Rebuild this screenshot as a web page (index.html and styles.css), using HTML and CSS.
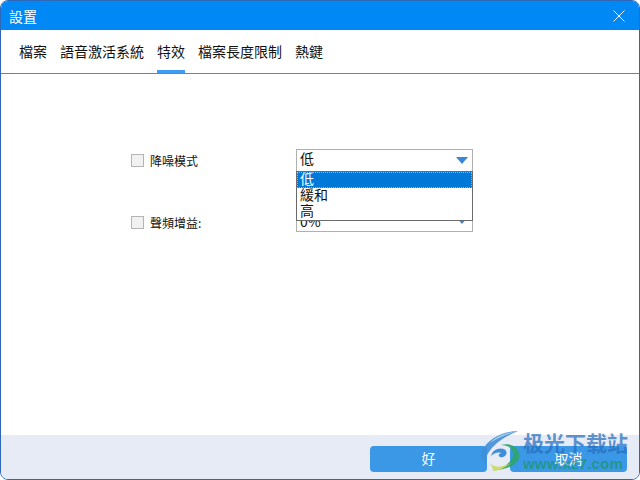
FILE: index.html
```html
<!DOCTYPE html>
<html lang="zh-Hant">
<head>
<meta charset="utf-8">
<title>設置</title>
<link rel="stylesheet" href="styles.css">
</head>
<body>
<div class="window">
  <header class="titlebar">
    <span class="title">設置</span>
    <svg class="close" width="12" height="12" viewBox="0 0 12 12"><path d="M.5.5l11 11M11.500.5l-11 11" stroke="#fff" stroke-width="1" fill="none"/></svg>
  </header>
  <nav class="tabs">
    <span class="tab">檔案</span>
    <span class="tab">語音激活系統</span>
    <span class="tab active">特效</span>
    <span class="tab">檔案長度限制</span>
    <span class="tab">熱鍵</span>
  </nav>
  <main class="content">
    <div class="row">
      <label class="check"><span class="box"></span>降噪模式</label>
      <div class="select">
        <span class="value">低</span>
        <span class="arrow"></span>
        <ul class="menu">
          <li class="selected">低</li>
          <li>緩和</li>
          <li>高</li>
        </ul>
      </div>
    </div>
    <div class="row">
      <label class="check check-gain"><span class="box"></span>聲頻增益:</label>
      <div class="select select-gain">
        <span class="value">0%</span>
        <span class="arrow"></span>
      </div>
    </div>
  </main>
  <footer class="footer">
    <button class="btn">好</button>
    <button class="btn">取消</button>
  </footer>
  <div class="watermark">
    <svg class="wm-logo" width="46" height="42" viewBox="0 0 46 42">
      <path d="M37 1C23 1 6 9 1 21c-2 6 0 11 5 13C3 28 8 20 16 13 22 8 30 4 37 1z" fill="#3f8fd8" opacity=".9"/>
      <path d="M37 1C27 2 15 6 9 13c8-5 17-9 28-12z" fill="#a9cfe8" opacity=".9"/>
      <path d="M20 15c10-3 20 3 18 13-2 7-10 10-20 12 8-5 14-10 14-16 0-6-6-9-12-9z" fill="#2fa56e" opacity=".92"/>
      <path d="M10 26c1-6 8-9 13-7 4 2 3 7-1 8-3 1-5-1-4-3 1-1 3-1 3 0-2-3-8-1-11 2z" fill="#3f8fd8"/>
      <path d="M8 32c4 6 12 6 22 1-6 5-12 8-18 8 0-4-2-6-4-9z" fill="#c9d95c" opacity=".9"/>
    </svg>
    <div class="wm-text">
      <span class="wm-name">极光下载站</span>
      <span class="wm-url">www.xz7.com</span>
    </div>
  </div>
</div>
</body>
</html>
```
FILE: styles.css
```css
* { box-sizing: border-box; }
html, body { margin: 0; padding: 0; height: 100%; background: #fff; }
body { font-family: "Noto Sans CJK TC", "Liberation Sans", sans-serif; color: #111; overflow: hidden; }

.window {
  position: relative;
  width: 640px;
  height: 480px;
  display: flex;
  flex-direction: column;
  background: #fff;
  border-radius: 8px;
  border: 1px solid #2f68b8;
  overflow: hidden;
}

.titlebar {
  height: 29px;
  flex: none;
  background: #0088f5;
  color: #fff;
  display: flex;
  align-items: center;
  justify-content: space-between;
  padding: 0 14px 0 8px;
}
.title { font-size: 14px; line-height: 20px; }
.close { display: block; }

.tabs {
  height: 44px;
  flex: none;
  display: flex;
  gap: 13px;
  padding-left: 18px;
  border-bottom: 1px solid #808080;
}
.tab {
  font-size: 14px;
  line-height: 42px;
  height: 43px;
}
.tab.active { box-shadow: inset 0 -3px 0 #3f9cf0; }

.content {
  flex: 1;
  display: flex;
  flex-direction: column;
  padding: 76px 0 0 130px;
  gap: 39px;
}
.row {
  display: flex;
  align-items: center;
  height: 21px;
}
.check {
  width: 165px;
  display: flex;
  align-items: center;
  gap: 6px;
  font-size: 12px;
}
.check-gain { margin-top: 4px; }
.box {
  width: 13px;
  height: 13px;
  background: #f1f1f1;
  border: 1px solid #b4b4b4;
}

.select {
  position: relative;
  width: 177px;
  height: 23px;
  border: 1px solid #b0b0b0;
  background: #fff;
  font-size: 14px;
  line-height: 16px;
  padding-left: 3px;
}
.select-gain .value { display: block; padding-top: 3px; }
.arrow {
  position: absolute;
  right: 4px;
  top: 7px;
  width: 0;
  height: 0;
  border-left: 6px solid transparent;
  border-right: 6px solid transparent;
  border-top: 7px solid #3a86d8;
}
.menu {
  position: absolute;
  z-index: 2;
  left: -1px;
  top: 21px;
  width: 177px;
  height: 50px;
  margin: 0;
  padding: 0;
  list-style: none;
  background: #fff;
  border: 1px solid #6a6a6a;
}
.menu li {
  height: 16px;
  line-height: 13px;
  padding-left: 3px;
  font-size: 14px;
  color: #111;
}
.menu li.selected {
  background: #0078d7;
  color: #fff;
  outline: 1px dotted #e8a060;
  outline-offset: -1px;
}

.footer {
  height: 44px;
  flex: none;
  background: #e6ebf5;
  display: flex;
  justify-content: flex-end;
  gap: 23px;
  padding: 11px 12px 0 0;
}
.btn {
  width: 117px;
  height: 26px;
  border: 0;
  border-radius: 4px;
  background: #3a98e6;
  color: #fff;
  font-family: inherit;
  font-size: 14px;
  padding: 0 0 2px;
}

.watermark {
  position: absolute;
  left: 480px;
  top: 429px;
  display: flex;
  pointer-events: none;
}
.wm-logo { display: block; }
.wm-text {
  display: flex;
  flex-direction: column;
  margin-left: -4px;
}
.wm-name {
  font-size: 21px;
  line-height: 24px;
  font-weight: 700;
  color: rgba(40, 110, 190, .72);
}
.wm-url {
  font-family: "Liberation Sans", sans-serif;
  font-size: 15px;
  line-height: 20px;
  font-weight: 700;
  letter-spacing: .2px;
  color: rgba(20, 150, 90, .65);
}
```
